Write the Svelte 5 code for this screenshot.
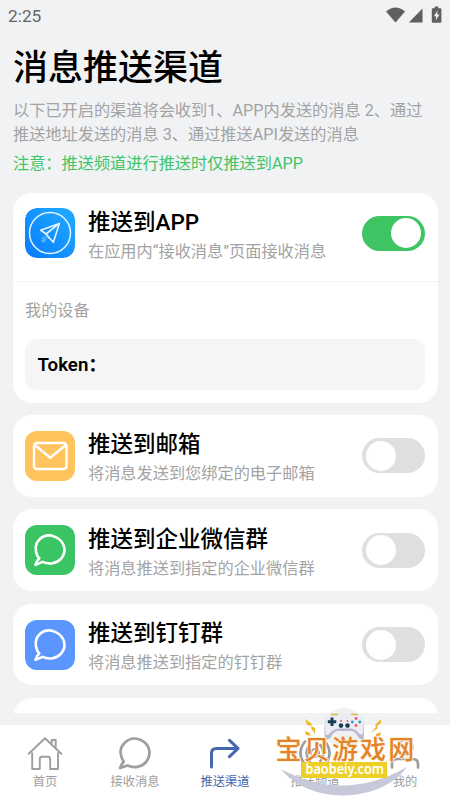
<script lang="ts">
	interface Channel {
		id: string;
		title: string;
		desc: string;
		icon: 'mail' | 'chat';
	}

	const channels: Channel[] = [
		{ id: 'email', title: '推送到邮箱', desc: '将消息发送到您绑定的电子邮箱', icon: 'mail' },
		{ id: 'wecom', title: '推送到企业微信群', desc: '将消息推送到指定的企业微信群', icon: 'chat' },
		{ id: 'dingtalk', title: '推送到钉钉群', desc: '将消息推送到指定的钉钉群', icon: 'chat' }
	];

	const tabs = [
		{ id: 'home', label: '首页' },
		{ id: 'inbox', label: '接收消息' },
		{ id: 'channel', label: '推送渠道' },
		{ id: 'topic', label: '推送频道' },
		{ id: 'me', label: '我的' }
	];

	let enabled = $state<Record<string, boolean>>({ app: true });
	let activeTab = $state('channel');

	function toggle(id: string) {
		enabled[id] = !enabled[id];
	}
</script>

{#snippet toggleSwitch(id: string, label: string)}
	<button
		type="button"
		class="switch"
		class:on={enabled[id]}
		role="switch"
		aria-checked={!!enabled[id]}
		aria-label={label}
		onclick={() => toggle(id)}
	>
		<span class="knob"></span>
	</button>
{/snippet}

<div class="screen">
	<header class="status">
		<span>2:25</span>
		<svg width="57" height="18" viewBox="0 0 57 18" fill="#5f5f5f">
			<path d="M0 5.4Q9.5-2.2 19 5.4L9.5 16.4Z" />
			<path d="M36.5 2.5V16.5H22.8Z" />
			<path d="M48.7 .5h3.6v1.7h2.1q1 0 1 1v12.5q0 1-1 1h-7.6q-1 0-1-1V3.2q0-1 1-1h1.9z" />
			<path d="M51.6 4.3 47.9 10.3h2.3l-.5 4.3 3.8-6.2h-2.4z" fill="#f1f2f4" />
		</svg>
	</header>

	<section class="intro">
		<h1>消息推送渠道</h1>
		<p class="desc">以下已开启的渠道将会收到1、APP内发送的消息 2、通过<br />推送地址发送的消息 3、通过推送API发送的消息</p>
		<p class="note">注意：推送频道进行推送时仅推送到APP</p>
	</section>

	<main class="list">
		<article class="card">
			<div class="row row-app">
				<svg class="badge" viewBox="0 0 50 50" fill="none">
					<defs>
						<linearGradient id="app-bg" x1="1" y1="0" x2="0" y2="1">
							<stop offset="0" stop-color="#20adff" />
							<stop offset="1" stop-color="#087bff" />
						</linearGradient>
					</defs>
					<rect width="50" height="50" rx="12" fill="url(#app-bg)" />
					<circle cx="25" cy="25" r="20.5" stroke="#e4f5ff" stroke-width="1.5" />
					<path d="M34.4 15.4 15.7 22.2 21 26 28.3 34.3ZM34.4 15.4 21 26 24.4 30.5" stroke="#e4f5ff" stroke-width="1.6" stroke-linejoin="round" />
					<path d="m16.8 30.5 2.5-2m-2.5 4.5 4.5-3.8m-3.5 5 3.8-3" stroke="#8cd0ff" stroke-width="1.1" stroke-dasharray="1.6 .7" />
				</svg>
				<div class="text">
					<h2>推送到APP</h2>
					<p>在应用内“接收消息”页面接收消息</p>
				</div>
				{@render toggleSwitch('app', '推送到APP')}
			</div>
			<div class="devices">
				<p>我的设备</p>
				<div class="token">Token：</div>
			</div>
		</article>

		{#each channels as channel (channel.id)}
			<article class="card row">
				<svg class="badge {channel.id}" viewBox="0 0 50 50" fill="none" stroke="#fff" stroke-linecap="round" stroke-linejoin="round">
					{#if channel.icon === 'mail'}
						<rect x="9" y="12" width="32.5" height="26" rx="3" stroke-width="2.4" />
						<path d="m10 14.3 15.2 12.4 15.3-12.4" stroke-width="2.4" />
					{:else}
						<path d="M12.2 30.5C6.6 16 19 7.4 29.5 11.6 39.3 15.6 42.5 26 36.3 33.3 31.5 38.8 24 39.8 17.5 36.9Q14.2 38.6 10.5 39.8 11.9 35.2 14.3 33.2C13.2 32.1 12.6 31.5 12.2 30.5Z" stroke-width="2.6" />
					{/if}
				</svg>
				<div class="text">
					<h2>{channel.title}</h2>
					<p>{channel.desc}</p>
				</div>
				{@render toggleSwitch(channel.id, channel.title)}
			</article>
		{/each}
		<article class="card peek"></article>
	</main>

	<nav class="tabbar">
		{#each tabs as tab (tab.id)}
			<button type="button" class="tab" class:active={activeTab === tab.id} onclick={() => (activeTab = tab.id)}>
				<svg width="36" height="36" viewBox="0 0 36 36" fill="none" stroke="currentColor" stroke-width="2" stroke-linecap="round" stroke-linejoin="round">
					{#if tab.id === 'home'}
						<path d="M1.7 17.8 18 2.2 34.3 17.8M5.2 17.3V33H12.8V23Q12.8 20.8 15 20.8H21Q23.2 20.8 23.2 23V33H31V17.3M24.7 7.3V4H28.7V11" stroke-width="1.9" />
					{:else if tab.id === 'inbox'}
						<path d="M5.1 22.6C-.4 10 11.6-.8 23.2 3.7 32.3 7.5 35.5 17.8 29 26 24.3 31.4 17 32.4 10.5 29.5Q7 30.7 3.2 32 4.3 28.3 6.8 25.5 5.6 24 5.1 22.6Z" stroke-width="2.7" />
					{:else if tab.id === 'channel'}
						<path d="M4.5 31V17.3Q4.5 12.4 9.5 12.4H31M22.5 4.3 31 12.4 22.5 20.6" stroke-width="3" />
					{:else if tab.id === 'topic'}
						<path d="M8 5.5Q-1 17 8 28.5M28 5.5Q37 17 28 28.5M12.6 9Q6.5 17 12.6 25M23.4 9Q29.5 17 23.4 25" stroke-width="2.7" />
						<circle cx="18" cy="17" r="4" />
					{:else}
						<circle cx="18" cy="11" r="7.3" stroke-width="2.7" />
						<path d="M5 31.5V28Q5 23 10.5 23H25.5Q31 23 31 28V31.5" stroke-width="2.7" />
					{/if}
				</svg>
				<span>{tab.label}</span>
			</button>
		{/each}
	</nav>

	<!-- Site mark floating over the tab bar -->
	<svg class="watermark" viewBox="0 0 150 94">
		<circle cx="69" cy="22" r="20" fill="#e9eaeb" opacity=".7" />
		<path d="M6 63Q68 97 132 61C105 98 34 99 6 63Z" fill="#c7c9d8" />
		<path d="M51 11.5Q53 9.5 60 10.5H79Q86 9.5 87.5 11.5 90 21 88.5 33.5 84 34 81.5 28 78 24 74 25H65Q61 24 57.5 28 55 34 50 34 48.7 21 51 11.5Z" fill="#b5b7cc" />
		<path d="M51 10Q54 8.5 62 9L65 10H75L79 9Q87 8.5 88 12.5 89 19 88 28 86 30 83 26.5 79 22 74 22.5H66Q60 22 56 26 52 31 50.5 28 49.5 20 51 10Z" fill="#ececf5" />
		<path d="M57 11.5v8.5M52.8 15.7h8.5" stroke="#164052" stroke-width="3" />
		<g fill="#164052">
			<circle cx="66" cy="19.6" r="2.3" />
			<circle cx="72.5" cy="19.6" r="2.3" />
		</g>
		<g fill="#e65968">
			<circle cx="66" cy="15" r=".9" />
			<circle cx="72.5" cy="15" r=".9" />
			<circle cx="81" cy="12.5" r="1.4" />
			<circle cx="81" cy="19.5" r="1.4" />
		</g>
		<g fill="#2b9dbd">
			<circle cx="77.3" cy="16" r="1.4" />
			<circle cx="84.7" cy="16" r="1.4" />
		</g>
		<path d="M56 8.5h7M76 8.5h7" stroke="#e7b64d" stroke-width="1.5" />
		<path d="m30 13 7 5-1 2 4 2v6l-4-6 1-2-5-1zM106 13l-6 6 1 2-5 6 7-5-1-2 4-3zM30 25l5 2v2l3 1-7-1zM106 26l-5 2v2l-4 1 8-1z" fill="#f5b52a" />
		<rect x="26" y="56" width="86" height="16" fill="#edcf27" />
		<text class="mark-name" x="0.5" y="52.5">宝贝游戏网</text>
		<text class="mark-site" x="30.5" y="68" textLength="78.5" lengthAdjust="spacingAndGlyphs">baobeiy.com</text>
	</svg>
</div>

<style>
	:global(body) {
		background: #f1f2f4;
	}

	.screen {
		position: relative;
		display: flex;
		flex-direction: column;
		width: 450px;
		height: 800px;
		overflow: hidden;
		background: #f1f2f4;
		color: #000;
		font-family: Roboto, 'Noto Sans CJK SC', sans-serif;
	}

	h1,
	h2,
	p {
		margin: 0;
		white-space: nowrap;
	}

	button {
		margin: 0;
		padding: 0;
		border: 0;
		background: none;
		font: inherit;
		color: inherit;
		cursor: pointer;
	}

	.status {
		display: flex;
		flex: none;
		justify-content: space-between;
		align-items: center;
		height: 32px;
		padding: 0 7px 0 8px;
		box-sizing: border-box;
		color: #666;
		font-size: 17.3px;
	}

	.status svg {
		margin-top: -2px;
	}

	.intro {
		flex: none;
		height: 160.6px;
		padding: 13px 13px 0;
		box-sizing: border-box;
		font-size: 16.2px;
		line-height: 24px;
	}

	h1 {
		font-size: 35px;
		font-weight: 500;
		line-height: 48px;
	}

	.desc {
		margin-top: 6px;
		color: #a3a3a3;
	}

	.note {
		margin-top: 4.5px;
		color: #3fc467;
	}

	.list {
		display: flex;
		flex: 1;
		flex-direction: column;
		gap: 12.5px;
		min-height: 0;
		margin-bottom: 12px;
		padding: 0 12.5px;
		overflow: hidden;
	}

	.card {
		flex: none;
		box-sizing: border-box;
		border-radius: 19px;
		background: #fff;
	}

	.row {
		display: flex;
		align-items: center;
		height: 81.8px;
		padding: 0 12.5px;
	}

	.row-app {
		height: 89px;
		padding-bottom: 7px;
		box-sizing: border-box;
		border-bottom: 1px solid #f3f3f3;
	}

	.peek {
		height: 82px;
	}

	.badge {
		flex: none;
		width: 50px;
		height: 50px;
		border-radius: 12px;
	}

	.email {
		background: #ffc45d;
	}

	.wecom {
		background: #3bc463;
	}

	.dingtalk {
		background: #5b96ff;
	}

	.text {
		flex: 1;
		margin-left: 13px;
		padding-top: 3.5px;
	}

	.row-app .text {
		padding-top: 4.5px;
	}

	h2 {
		font-size: 22.5px;
		font-weight: 500;
		line-height: 30px;
	}

	.text p {
		margin-top: 3px;
		color: #a3a3a3;
		font-size: 16.2px;
		line-height: 24px;
	}

	.switch {
		flex: none;
		width: 63px;
		height: 35px;
		padding: 2.5px 4px;
		border-radius: 18px;
		background: #dfdfdf;
	}

	.knob {
		display: block;
		width: 30px;
		height: 30px;
		border-radius: 50%;
		background: #fff;
	}

	.switch.on {
		background: #3fc463;
	}

	.switch.on .knob {
		margin-left: auto;
	}

	.devices {
		height: 121px;
		padding: 17px 12.5px 0;
		box-sizing: border-box;
		color: #a3a3a3;
		font-size: 16.2px;
		line-height: 24px;
	}

	.token {
		height: 51px;
		margin-top: 16.5px;
		padding-left: 12.5px;
		border-radius: 12px;
		background: #f5f5f5;
		color: #000;
		font-size: 18.7px;
		font-weight: 600;
		line-height: 53px;
	}

	.tabbar {
		display: flex;
		flex: none;
		height: 75px;
		background: #fff;
	}

	.tab {
		display: flex;
		flex: 1;
		flex-direction: column;
		align-items: center;
		padding-top: 11px;
		color: #9e9e9e;
		font-size: 12.3px;
		line-height: 20px;
	}

	.tab.active {
		color: #4667ad;
	}

	.watermark {
		position: absolute;
		left: 275px;
		top: 706px;
		width: 150px;
		height: 94px;
		pointer-events: none;
	}

	.mark-name {
		fill: #e2832b;
		stroke: #fff3dd;
		stroke-width: 1.5px;
		paint-order: stroke;
		font-size: 26px;
		font-weight: 500;
		letter-spacing: 2.2px;
	}

	.mark-site {
		fill: #fff;
		font-family: 'Noto Sans', sans-serif;
		font-size: 13.5px;
		font-weight: 600;
	}
</style>
